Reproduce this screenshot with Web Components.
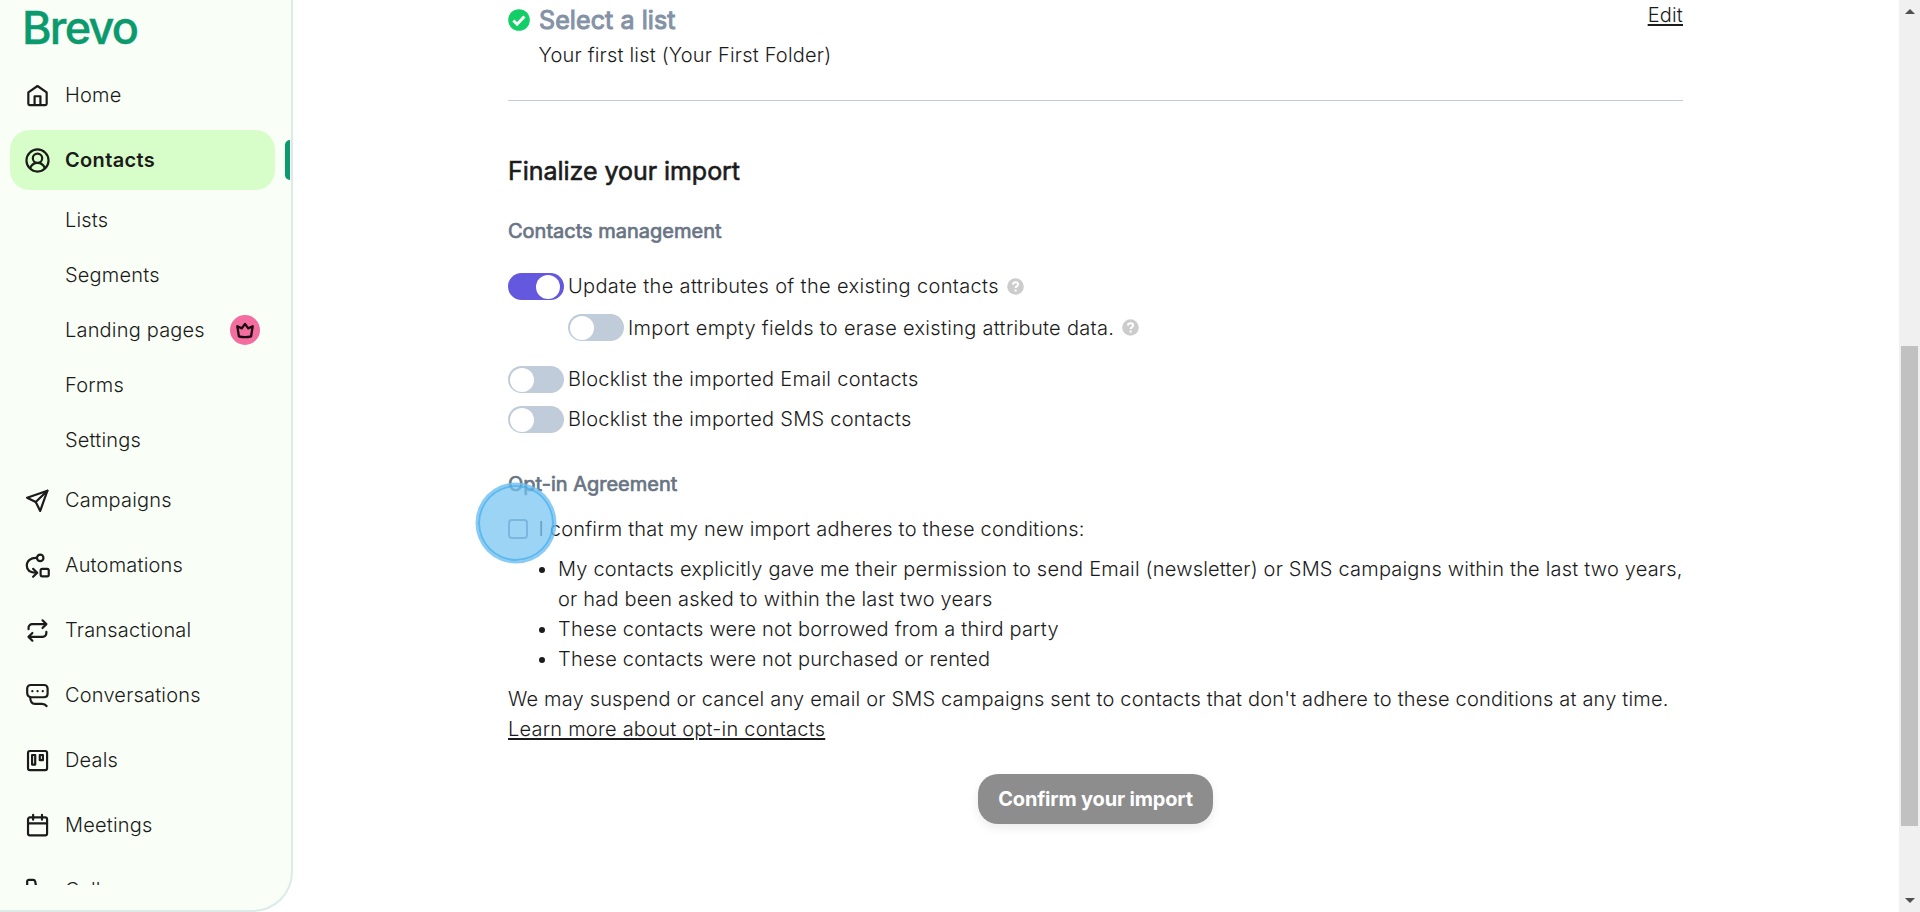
<!DOCTYPE html>
<html lang="en">
<head>
<meta charset="utf-8">
<title>Import contacts</title>
<style>
  html, body {
    margin: 0;
    height: 100%;
    overflow: hidden;
    background: #fff;
  }

  body {
    font-family: Inter, 'Liberation Sans', sans-serif;
    font-size: 20px;
    font-weight: 300;
    line-height: 30px;
    letter-spacing: .19px;
    color: #1b1b1b;
  }
</style>
</head>
<body>
<import-app></import-app>

<script>
const ICONS = {
  home: '<path d="M3.2 9 12 2.9 20.8 9v11a1.2 1.2 0 0 1-1.2 1.2H4.4A1.2 1.2 0 0 1 3.2 20z"/><path d="M9.2 21v-8.3h5.6V21"/>',
  contacts: '<circle cx="12" cy="12" r="10.6"/><circle cx="12" cy="9.9" r="4.5"/><path d="M5 19.3c1.3-3.3 4-5 7-5s5.7 1.7 7 5"/>',
  campaigns: '<path d="M21.5 2.6 2 9.3l8.3 4.2L14.6 22z"/><path d="M21.5 2.6 10.3 13.5"/>',
  automations: '<circle cx="14.6" cy="4.7" r="3.1"/><path d="M11.4 4.7C5.5 4.2 1.7 7.7 1.7 12c0 4.4 3.3 7 9.5 7"/><path d="m7.8 15.2 3.9 3.8-3.9 3.8"/><rect x="15" y="15.2" width="7.8" height="7.3" rx="1.6"/>',
  transactional: '<path d="M3.4 10.8V9.3a3.4 3.4 0 0 1 3.4-3.4h13.4"/><path d="m16.8 2.2 3.7 3.7-3.7 3.7"/><path d="M20.5 13.2v1.5a3.4 3.4 0 0 1-3.4 3.4H3.7"/><path d="m7.1 14.4-3.7 3.7 3.7 3.7"/>',
  conversations: '<path d="M18 13.7c2.3 0 3.7-1.5 3.7-3.6V5.3c0-2-1.4-3.4-3.4-3.4H5.5C3.5 1.9 2.1 3.3 2.1 5.3v4c0 2.3 1.1 3.8 3.4 4.2z"/><path d="M5 13.5c0 4 1.2 6.6 4.6 6.6h6.7c2.1 0 3.3.5 4.4 2"/><path d="M7 7.8h.1M12 7.8h.1M17 7.8h.1"/>',
  deals: '<rect x="2.9" y="2.9" width="18.3" height="18.3" rx="1.8"/><path d="M6.8 6.7h3v9.2h-3zM14.2 6.7h3v5h-3z"/>',
  meetings: '<rect x="2.9" y="4.2" width="18.3" height="17.3" rx="1.8"/><path d="M2.9 10h18.3M7.8 1.8v4.7M16.3 1.8v4.7"/>',
  calls: '<path d="M2.1 7V3.4c0-1 .7-1.6 1.7-1.6h4c1 0 1.7.6 2 1.6l.9 5-3 2.5c1.5 3 3.3 4.8 6 6l2.6-3 4.9 1c1 .2 1.5 1 1.5 2v4c0 1-.7 1.7-1.7 1.7C10 22.6 2.1 15 2.1 7z"/>'
};

function define(name, html) {
  const template = document.createElement('template');
  template.innerHTML = html;

  customElements.define(name, class extends HTMLElement {
    constructor() {
      super();
      this.attachShadow({ mode: 'open' });
      this.shadowRoot.appendChild(template.content.cloneNode(true));
    }
  });
}

class NavIcon extends HTMLElement {
  constructor() {
    super();
    this.attachShadow({ mode: 'open' });
  }

  connectedCallback() {
    this.shadowRoot.innerHTML = `
      <style>
        :host { display: block; width: 25px; height: 25px; flex: none; }
        svg {
          display: block;
          width: 25px;
          height: 25px;
          fill: none;
          stroke: #1b1b1b;
          stroke-width: 2.1;
          stroke-linecap: round;
          stroke-linejoin: round;
        }
      </style>
      <svg viewBox="0 0 24 24">${ICONS[this.getAttribute('name')] || ''}</svg>
    `;
  }
}
customElements.define('nav-icon', NavIcon);

class NavItem extends HTMLElement {
  constructor() {
    super();
    this.attachShadow({ mode: 'open' });
  }

  connectedCallback() {
    const icon = this.getAttribute('icon');
    this.shadowRoot.innerHTML = `
      <style>
        :host {
          display: flex;
          align-items: center;
          box-sizing: border-box;
          flex: none;
          position: relative;
          width: 265px;
          height: 60px;
          padding: 0 15px;
          gap: 15px;
          border-radius: 20px;
          white-space: nowrap;
        }
        :host([sub]) { height: 50px; padding-left: 55px; justify-content: space-between; }
        :host([active]) { background: #d7fec8; font-weight: 600; letter-spacing: .35px; }
        :host([active])::after {
          content: '';
          position: absolute;
          left: 275px;
          top: 10px;
          width: 5px;
          height: 40px;
          border-radius: 5px 0 0 5px;
          background: #0b996e;
        }
      </style>
      ${icon ? `<nav-icon name="${icon}"></nav-icon>` : ''}
      <span><slot></slot></span>
      <slot name="badge"></slot>
    `;
  }
}
customElements.define('nav-item', NavItem);

define('premium-badge', `
  <style>
    :host { display: block; width: 30px; height: 30px; border-radius: 50%; background: #f46d9f; }
    svg { display: block; }
  </style>
  <svg width="30" height="30" fill="none" stroke="#1b0a12" stroke-width="2.3" stroke-linejoin="round">
    <path d="m7.3 11.2 1.6 10.1q6.1 1.7 12.2 0l1.6-10.1-4.5 2.2L15 8.9l-3.2 4.5z"/>
  </svg>
`);

define('brand-logo', `
  <style>
    :host { display: block; height: 65px; }
    svg { display: block; overflow: visible; }
    text { font: 500 45px/1 Inter, sans-serif; letter-spacing: 0; fill: #0b996e; stroke: #0b996e; stroke-width: .4; }
  </style>
  <svg width="125" height="60">
    <text x="-3" y="43.5" textLength="117" lengthAdjust="spacing">Brevo</text>
  </svg>
`);

define('side-nav', `
  <style>
    :host {
      display: block;
      box-sizing: border-box;
      flex: none;
      width: 293px;
      height: 912px;
      border: solid #dcebe8;
      border-width: 0 2px 2px 0;
      border-bottom-right-radius: 40px;
      background: #f9fff6;
    }
    nav {
      display: flex;
      flex-direction: column;
      gap: 5px;
      height: 820px;
      padding-left: 10px;
      overflow: hidden;
    }
    brand-logo { padding-left: 25px; }
  </style>
  <brand-logo></brand-logo>
  <nav>
    <nav-item icon="home">Home</nav-item>
    <nav-item icon="contacts" active>Contacts</nav-item>
    <nav-item sub>Lists</nav-item>
    <nav-item sub>Segments</nav-item>
    <nav-item sub>Landing pages<premium-badge slot="badge"></premium-badge></nav-item>
    <nav-item sub>Forms</nav-item>
    <nav-item sub>Settings</nav-item>
    <nav-item icon="campaigns">Campaigns</nav-item>
    <nav-item icon="automations">Automations</nav-item>
    <nav-item icon="transactional">Transactional</nav-item>
    <nav-item icon="conversations">Conversations</nav-item>
    <nav-item icon="deals">Deals</nav-item>
    <nav-item icon="meetings">Meetings</nav-item>
    <nav-item icon="calls">Calls</nav-item>
  </nav>
`);

define('help-icon', `
  <style>
    :host { display: block; width: 17px; height: 17px; margin-left: 8px; }
    svg { display: block; }
  </style>
  <svg width="17" height="17" fill="none" stroke="#fff" stroke-width="2">
    <circle cx="8.5" cy="8.5" r="8.3" fill="#ccc" stroke="none"/>
    <path d="M5.9 6.6c.2-1.6 1.2-2.3 2.6-2.3 1.5 0 2.6.8 2.6 2.1 0 1.7-2.5 1.8-2.5 3.7M8.6 11.5v2"/>
  </svg>
`);

define('toggle-row', `
  <style>
    :host { display: flex; align-items: center; height: 27px; white-space: nowrap; letter-spacing: .27px; }
    :host([on]) { letter-spacing: .35px; }
    :host(.nested) { letter-spacing: .3px; }
    .track {
      box-sizing: border-box;
      flex: none;
      width: 56px;
      height: 27px;
      margin-right: 4px;
      padding: 1.5px 2px;
      border-radius: 14px;
      background: #c0ccda;
    }
    .knob { width: 24px; height: 24px; border-radius: 50%; background: #fff; }
    :host([on]) .track { background: #6358de; }
    :host([on]) .knob { margin-left: 26px; }
    .label { padding-bottom: 1px; }
    :host(.nested) .label { padding-bottom: 0; }
  </style>
  <div class="track"><div class="knob"></div></div>
  <span class="label"><slot></slot></span>
  <slot name="help"></slot>
`);

define('step-summary', `
  <style>
    :host { display: block; height: 100px; border-bottom: 1px solid #c0ccda; }
    header { display: flex; align-items: flex-start; height: 40px; }
    svg { flex: none; margin: 9px 9px 0 0; }
    h2 {
      flex: 1;
      margin: 0;
      font-size: 25px;
      font-weight: 400;
      line-height: 41px;
      letter-spacing: .1px;
      color: #8492a6;
      -webkit-text-stroke: 1px;
    }
    a { color: inherit; text-decoration: underline; text-decoration-thickness: 2px; text-underline-offset: 2px; }
    p { margin: 0 0 0 30.5px; }
  </style>
  <header>
    <svg width="22" height="22" fill="none">
      <circle cx="11" cy="11" r="10.8" fill="#13ce66"/>
      <path d="m5.4 11.5 3.7 3.7 7.3-7.7" stroke="#fff" stroke-width="3"/>
    </svg>
    <h2><slot name="title"></slot></h2>
    <a>Edit</a>
  </header>
  <p><slot></slot></p>
`);

define('opt-in-terms', `
  <style>
    :host { display: block; position: relative; margin-top: 15px; letter-spacing: .2px; }
    label { display: flex; align-items: center; gap: 10.5px; }
    .box { box-sizing: border-box; width: 20px; height: 20px; border: 2px solid #8492a6; border-radius: 4px; }
    ul { margin: 10px 0; padding-left: 50px; }
    li:first-child { letter-spacing: .19px; }
    p { margin: 0; white-space: nowrap; letter-spacing: .18px; }
    a { text-decoration: underline; text-decoration-thickness: 2px; text-underline-offset: 2px; letter-spacing: .22px; }
    /* click marker floating over the checkbox */
    .marker {
      position: absolute;
      left: -30px;
      top: -29px;
      width: 76px;
      height: 76px;
      border-radius: 50%;
      background: rgba(118, 196, 241, .73);
      box-shadow: 0 0 0 2.5px rgba(110, 190, 240, .8), inset 0 0 0 2px rgba(58, 170, 236, .65);
    }
  </style>
  <label><span class="box"></span><span>I confirm that my new import adheres to these conditions:</span></label>
  <ul>
    <li>My contacts explicitly gave me their permission to send Email (newsletter) or SMS campaigns within the last two years,<br>or had been asked to within the last two years</li>
    <li>These contacts were not borrowed from a third party</li>
    <li>These contacts were not purchased or rented</li>
  </ul>
  <p>We may suspend or cancel any email or SMS campaigns sent to contacts that don't adhere to these conditions at any time.<br><a>Learn more about opt-in contacts</a></p>
  <div class="marker"></div>
`);

define('submit-button', `
  <style>
    :host { display: flex; justify-content: center; margin-top: 30px; }
    button {
      width: 235px;
      height: 50px;
      padding: 0;
      border: 0;
      border-radius: 20px;
      background: #8d8d8d;
      color: #fff;
      font: 700 20px/30px Inter, sans-serif;
      letter-spacing: -.18px;
      white-space: nowrap;
      box-shadow: 0 4px 10px rgba(0, 0, 0, .08);
    }
  </style>
  <button><slot></slot></button>
`);

define('page-scrollbar', `
  <style>
    :host {
      display: flex;
      flex-direction: column;
      align-items: center;
      justify-content: space-between;
      box-sizing: border-box;
      flex: none;
      width: 21px;
      height: 912px;
      padding: 9px 0;
      background: #f0f0f0;
    }
    .thumb { width: 17px; height: 480px; margin-top: 332px; margin-bottom: 72px; background: #c1c1c1; }
    svg { display: block; fill: #505050; }
  </style>
  <svg width="10" height="5"><path d="M0 5 5 0l5 5z"/></svg>
  <div class="thumb"></div>
  <svg width="10" height="5"><path d="m0 0 5 5 5-5z"/></svg>
`);

define('import-app', `
  <style>
    :host { display: flex; height: 912px; }
    main { flex: 1; }
    section { width: 1175px; margin-left: 215px; }
    h1, h3 { font-weight: 400; letter-spacing: 0; }
    h1 { margin: 52px 0 0; font-size: 25px; line-height: 36px; letter-spacing: -.04px; -webkit-text-stroke: .6px; }
    h3 { margin: 27px 0; font-size: 20px; line-height: 30px; color: #687484; -webkit-text-stroke: .7px; }
    h3.agreement { margin: 36px 0 0; }
    .nested { margin: 14px 0 25px 60px; }
    .last { margin-top: 13px; }
  </style>
  <side-nav></side-nav>
  <main>
    <section>
      <step-summary><span slot="title">Select a list</span>Your first list (Your First Folder)</step-summary>
      <h1>Finalize your import</h1>
      <h3>Contacts management</h3>
      <toggle-row on>Update the attributes of the existing contacts<help-icon slot="help"></help-icon></toggle-row>
      <toggle-row class="nested">Import empty fields to erase existing attribute data.<help-icon slot="help"></help-icon></toggle-row>
      <toggle-row>Blocklist the imported Email contacts</toggle-row>
      <toggle-row class="last">Blocklist the imported SMS contacts</toggle-row>
      <h3 class="agreement">Opt-in Agreement</h3>
      <opt-in-terms></opt-in-terms>
      <submit-button>Confirm your import</submit-button>
    </section>
  </main>
  <page-scrollbar></page-scrollbar>
`);
</script>
</body>
</html>
